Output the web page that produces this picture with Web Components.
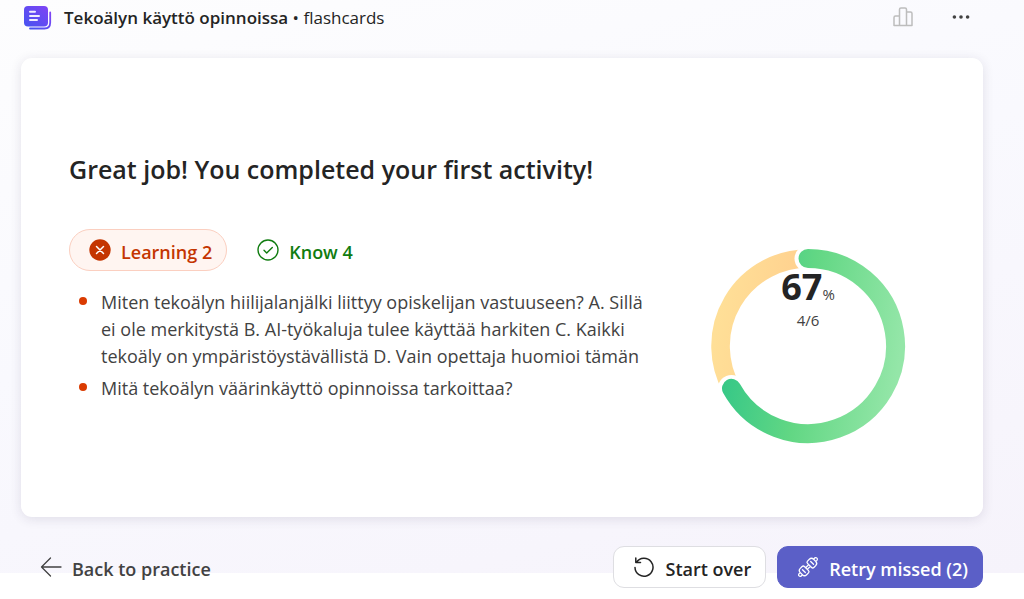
<!DOCTYPE html>
<html lang="en">
<head>
<meta charset="utf-8">
<meta name="viewport" content="width=device-width, initial-scale=1">
<title>Tekoälyn käyttö opinnoissa</title>
<style>
body { margin: 0; background: #fff; font-family: "Open Sans", "Noto Sans", sans-serif; color: #242424; }
</style>
</head>
<body>
<activity-page></activity-page>

<template id="page-tpl">
<style>
:host {
  display: flex; flex-direction: column; box-sizing: border-box; min-height: 100vh;
  padding: 0 41px 11px 21px;
  background: linear-gradient(165deg, #fdfdfe 0%, #f9f9fe 45%, #f6f3fb 100%) no-repeat 0 0 / 100% calc(100% - 26px);
}
result-card { flex: 1; }
h1 { margin: 0; font-size: 25px; line-height: 36px; font-weight: 600; }
.chips { display: flex; gap: 10px; margin: 42px 0 18px; }
ul { margin: 0; padding: 0; list-style: none; display: grid; gap: 5px; }
</style>
<activity-header>
  <span slot="title">Tekoälyn käyttö opinnoissa</span>
  <span slot="kind">flashcards</span>
</activity-header>
<result-card>
  <h1>Great job! You completed your first activity!</h1>
  <div class="chips">
    <result-chip kind="learning">Learning 2</result-chip>
    <result-chip kind="know">Know 4</result-chip>
  </div>
  <ul>
    <li><missed-item>Miten tekoälyn hiilijalanjälki liittyy opiskelijan vastuuseen? A. Sillä ei ole merkitystä B. AI-työkaluja tulee käyttää harkiten C. Kaikki tekoäly on ympäristöystävällistä D. Vain opettaja huomioi tämän</missed-item></li>
    <li><missed-item>Mitä tekoälyn väärinkäyttö opinnoissa tarkoittaa?</missed-item></li>
  </ul>
  <score-ring slot="score"><span slot="value">67</span><span slot="unit">%</span><span slot="count">4/6</span></score-ring>
</result-card>
<activity-footer></activity-footer>
</template>

<template id="header-tpl">
<style>
:host { display: block; }
header { display: flex; align-items: center; height: 36px; margin-bottom: 22px; padding: 0 9px 0 2px; }
.logo { display: block; margin-right: 12px; }
p { margin: 0; flex: 1; font-size: 17px; line-height: 24px; }
b { font-weight: 600; }
button { border: 0; background: none; padding: 0; margin: 0 0 2px 32px; width: 26px; height: 26px; display: grid; place-items: center; color: #424242; }
button[disabled] { color: #bdbdbd; }
</style>
<header>
  <svg class="logo" width="29" height="26" viewBox="0 0 29 26" aria-hidden="true">
    <defs><linearGradient id="lg" x1="0" y1="1" x2="1" y2="0"><stop offset="0" stop-color="#4653f0"/><stop offset="1" stop-color="#8044f5"/></linearGradient></defs>
    <path d="M7 23.500H21.500Q27.200 23.500 27.200 17.500V7.500" fill="none" stroke="url(#lg)" stroke-width="1.800" stroke-linecap="round"/>
    <rect x="1" y="1" width="24" height="20.500" rx="4" fill="url(#lg)"/>
    <g stroke="#f1edff" stroke-width="2" stroke-linecap="round"><path d="M7 6.700h5M7 11h9M7 15h7"/></g>
  </svg>
  <p><b><slot name="title"></slot></b> • <slot name="kind"></slot></p>
  <button disabled aria-label="Statistics"><svg width="20" height="20" viewBox="0 0 20 20" fill="none" stroke="currentColor" stroke-width="1.500" stroke-linejoin="round"><path d="M6.500 18.500V2.500a1.500 1.500 0 0 1 1.500-1.500h4a1.500 1.500 0 0 1 1.500 1.500V18.500M6.500 9H2.500A1.500 1.500 0 0 0 1 10.500V18.500H19V6.500A1.500 1.500 0 0 0 17.500 5H13.500"/></svg></button>
  <button aria-label="More options"><svg width="18" height="6" viewBox="0 0 18 6" fill="currentColor"><circle cx="2.400" cy="3" r="1.800"/><circle cx="9" cy="3" r="1.800"/><circle cx="15.600" cy="3" r="1.800"/></svg></button>
</header>
</template>

<template id="card-tpl">
<style>
:host {
  display: grid; grid-template-columns: minmax(0, 1fr) 196px; column-gap: 62px; align-items: center;
  box-sizing: border-box; padding: 0 77px 0 48px; border-radius: 11px; background: #fff;
  box-shadow: 0 2px 12px rgba(40, 30, 70, .12);
}
.text { padding-bottom: 22px; }
.score { padding-top: 116px; }
</style>
<div class="text"><slot></slot></div>
<div class="score"><slot name="score"></slot></div>
</template>

<template id="chip-tpl">
<style>
:host { display: block; }
button {
  display: flex; align-items: center; gap: 10px; height: 42px; padding: 0 14px 0 19px;
  border: 1px solid transparent; border-radius: 21px; background: none;
  font: 600 18px/24px "Open Sans", "Noto Sans", sans-serif; color: #107c10;
}
:host([kind="learning"]) button { background: #fff5f1; border-color: #fbcfc0; color: #c43501; }
svg { display: none; }
span { padding-top: 3px; }
:host([kind="learning"]) .miss, :host([kind="know"]) .hit { display: block; }
</style>
<button>
  <svg class="miss" width="22" height="22" viewBox="0 0 22 22" aria-hidden="true"><circle cx="11" cy="11" r="10.700" fill="#c43501"/><path d="M7.500 7.500l7 7M14.500 7.500l-7 7" stroke="#fff" stroke-width="1.500" stroke-linecap="round"/></svg>
  <svg class="hit" width="22" height="22" viewBox="0 0 22 22" fill="none" stroke="#107c10" stroke-width="1.400" stroke-linecap="round" stroke-linejoin="round" aria-hidden="true"><circle cx="11" cy="11" r="10"/><path d="M7 11.300l2.700 2.700 5.600-5.600"/></svg>
  <span><slot></slot></span>
</button>
</template>

<template id="item-tpl">
<style>
:host { display: grid; grid-template-columns: 8px 1fr; column-gap: 14px; padding-left: 10px; font-size: 18px; line-height: 27px; color: #424242; }
i { width: 8px; height: 8px; margin-top: 8px; border-radius: 50%; background: #da3b01; }
</style>
<i></i><div><slot></slot></div>
</template>

<template id="ring-tpl">
<style>
:host { display: grid; justify-items: center; }
svg, div { grid-area: 1 / 1; }
div { padding-top: 18px; text-align: center; }
p { margin: 0; font-size: 15px; line-height: 24px; color: #424242; }
.big { height: 42px; line-height: 42px; }
b { font-size: 36px; font-weight: 700; color: #242424; }
</style>
<svg width="196" height="196" viewBox="0 0 196 196" fill="none" aria-hidden="true">
  <defs>
    <linearGradient id="g" gradientUnits="userSpaceOnUse" x1="12" y1="110" x2="186" y2="135"><stop offset="0" stop-color="#34c787"/><stop offset=".45" stop-color="#62d784"/><stop offset="1" stop-color="#94e6a8"/></linearGradient>
    <linearGradient id="y" gradientUnits="userSpaceOnUse" x1="10" y1="60" x2="98" y2="75"><stop offset="0" stop-color="#ffdf97"/><stop offset="1" stop-color="#ffce8d"/></linearGradient>
  </defs>
  <path d="M21.500 140.400A87.500 87.500 0 0 1 98 10.500" stroke="url(#y)" stroke-width="18.600"/>
  <circle cx="98" cy="10.500" r="13.500" fill="#fff"/><circle cx="21.500" cy="140.400" r="13.500" fill="#fff"/>
  <path d="M98 10.500A87.500 87.500 0 1 1 21.500 140.400" stroke="url(#g)" stroke-width="19" stroke-linecap="round"/>
</svg>
<div><p class="big"><b><slot name="value"></slot></b><slot name="unit"></slot></p><p><slot name="count"></slot></p></div>
</template>

<template id="footer-tpl">
<style>
:host { display: block; margin-top: 29px; }
footer { display: flex; align-items: center; gap: 11px; }
a { display: flex; align-items: center; gap: 10px; margin-right: auto; padding-left: 19px; color: #424242; text-decoration: none; font-size: 18px; line-height: 24px; font-weight: 600; }
button {
  display: flex; align-items: center; gap: 10px; height: 42px; box-sizing: border-box; padding: 0 14px 0 19px;
  border: 1px solid #dedee2; border-radius: 11px; background: #fff; color: #242424;
  font: 600 18px/24px "Open Sans", "Noto Sans", sans-serif;
}
button.primary { background: #5b5fc7; border-color: #5b5fc7; color: #fff; }
span { padding-top: 3px; }
svg { fill: none; stroke: currentColor; stroke-linecap: round; stroke-linejoin: round; }
</style>
<footer>
  <a href="#practice"><svg width="22" height="20" viewBox="0 0 22 20" stroke-width="1.300" aria-hidden="true"><path d="M10.500 1L1.500 10l9 9M1.500 10H21"/></svg><span>Back to practice</span></a>
  <button><svg width="22" height="22" viewBox="0 0 22 22" stroke-width="1.500" aria-hidden="true"><path d="M3.500 6.300A9 9 0 1 1 2 11.500M2.800 2v4.600H7.500"/></svg><span>Start over</span></button>
  <button class="primary"><svg width="22" height="22" viewBox="0 0 22 22" stroke-width="1.300" aria-hidden="true"><g transform="rotate(-45 11 11)"><path d="M8.800 9.800h4.400M8.800 12.200h4.400M4.600 6.500h2.600q1.600 0 1.600 1.600v5.800q0 1.600-1.600 1.600H4.600q-3 0-3-3v-3q0-3 3-3zM17.400 6.500h-2.600q-1.600 0-1.600 1.600v5.800q0 1.600 1.600 1.600h2.600q3 0 3-3v-3q0-3-3-3zM5.200 9v4M16.800 9v4M1.400 9.500q-3-.5-3 1.500t3 1.500M20.600 9.500q3-.5 3 1.500t-3 1.500"/></g></svg><span>Retry missed (2)</span></button>
</footer>
</template>

<script>
class TemplateElement extends HTMLElement {
  constructor() {
    super();
    const tpl = document.getElementById(this.constructor.template);
    this.attachShadow({ mode: "open" }).append(tpl.content.cloneNode(true));
  }
}
const define = (name, template) =>
  customElements.define(name, class extends TemplateElement { static template = template; });
define("activity-header", "header-tpl");
define("result-card", "card-tpl");
define("result-chip", "chip-tpl");
define("missed-item", "item-tpl");
define("score-ring", "ring-tpl");
define("activity-footer", "footer-tpl");
define("activity-page", "page-tpl");
</script>
</body>
</html>
